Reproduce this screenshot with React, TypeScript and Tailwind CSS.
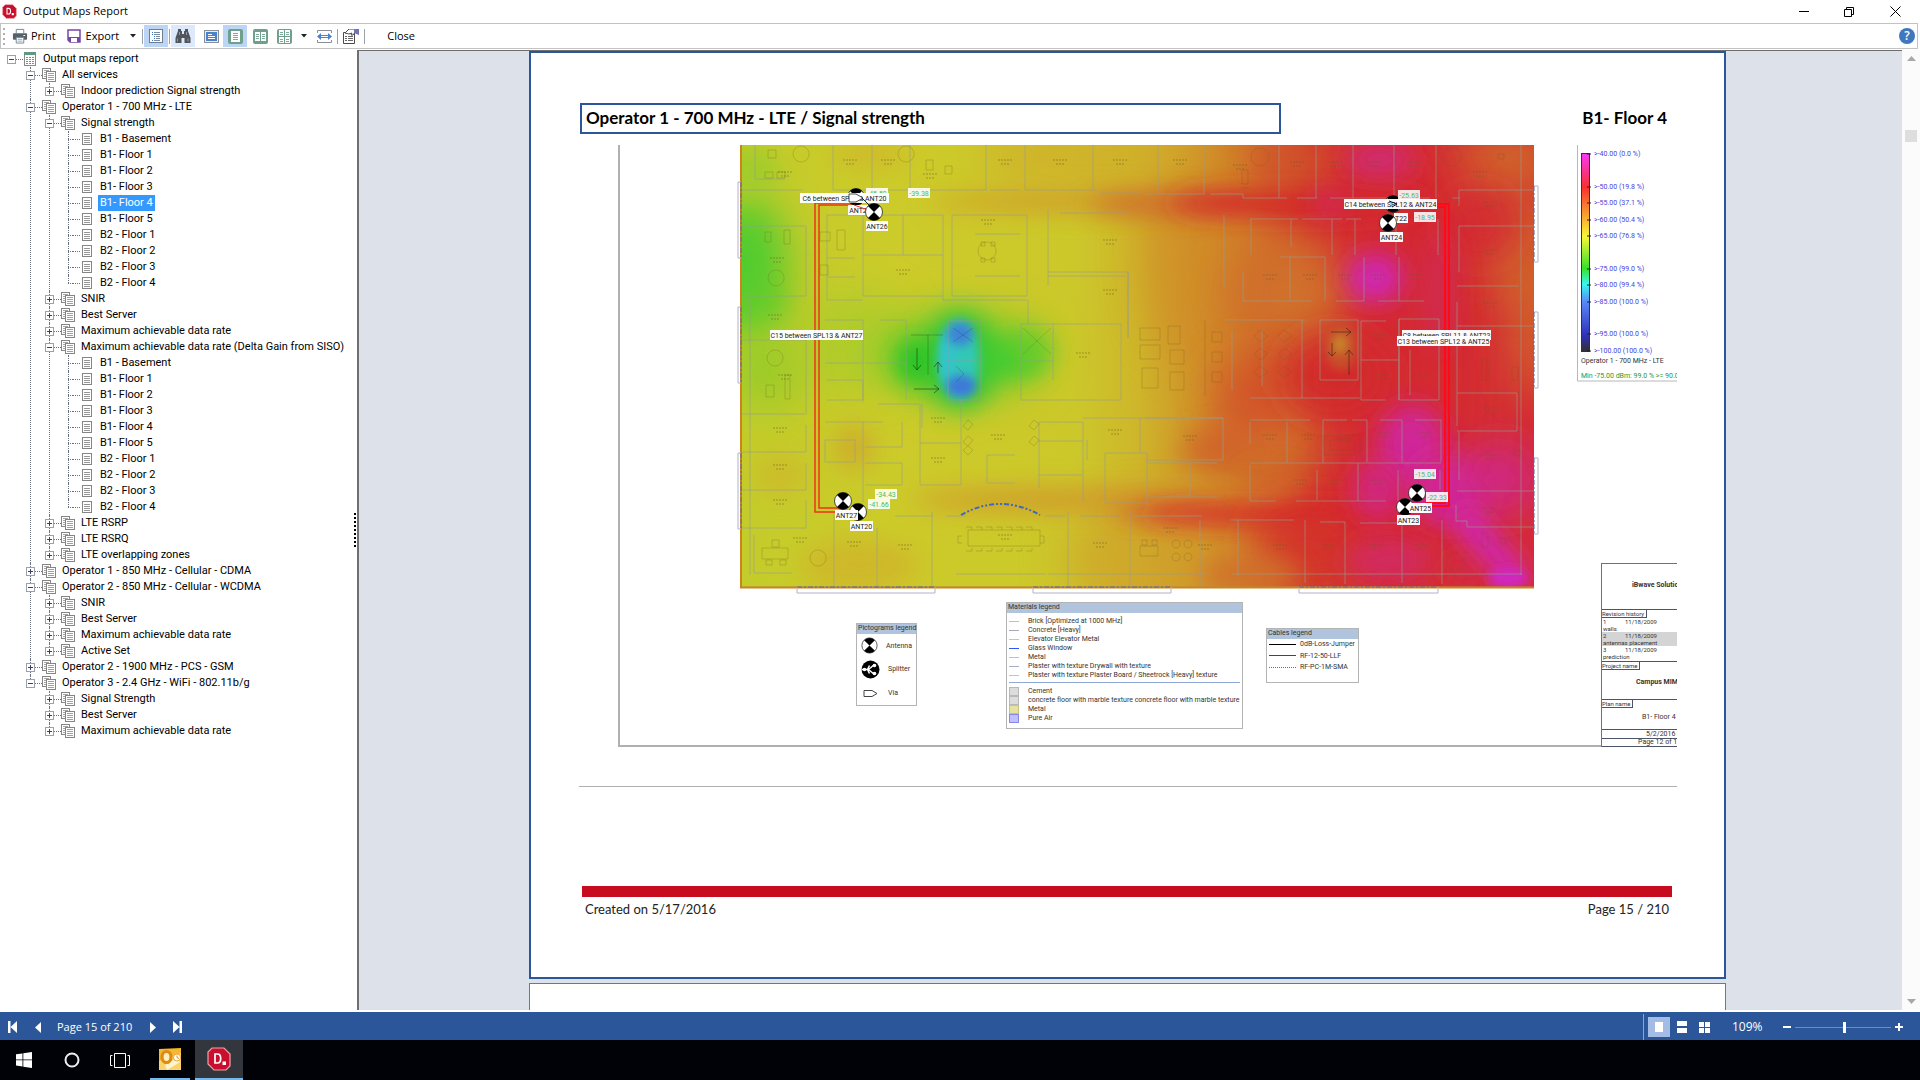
import { useState } from 'react'
import type { ReactNode } from 'react'

interface TreeNode {
  label: string
  open?: boolean
  children?: TreeNode[]
}

const floors = (): TreeNode[] => [
  { label: 'B1 - Basement' },
  { label: 'B1- Floor 1' },
  { label: 'B1- Floor 2' },
  { label: 'B1- Floor 3' },
  { label: 'B1- Floor 4' },
  { label: 'B1- Floor 5' },
  { label: 'B2 - Floor 1' },
  { label: 'B2 - Floor 2' },
  { label: 'B2 - Floor 3' },
  { label: 'B2 - Floor 4' },
]

const closed = (label: string): TreeNode => ({ label, open: false, children: [] })

const tree: TreeNode = {
  label: 'Output maps report',
  open: true,
  children: [
    { label: 'All services', open: true, children: [closed('Indoor prediction Signal strength')] },
    {
      label: 'Operator 1 - 700 MHz - LTE',
      open: true,
      children: [
        { label: 'Signal strength', open: true, children: floors() },
        closed('SNIR'),
        closed('Best Server'),
        closed('Maximum achievable data rate'),
        { label: 'Maximum achievable data rate (Delta Gain from SISO)', open: true, children: floors() },
        closed('LTE RSRP'),
        closed('LTE RSRQ'),
        closed('LTE overlapping zones'),
      ],
    },
    closed('Operator 1 - 850 MHz - Cellular - CDMA'),
    {
      label: 'Operator 2 - 850 MHz - Cellular - WCDMA',
      open: true,
      children: [closed('SNIR'), closed('Best Server'), closed('Maximum achievable data rate'), closed('Active Set')],
    },
    closed('Operator 2 - 1900 MHz - PCS - GSM'),
    {
      label: 'Operator 3 - 2.4 GHz - WiFi - 802.11b/g',
      open: true,
      children: [closed('Signal Strength'), closed('Best Server'), closed('Maximum achievable data rate')],
    },
  ],
}

function AppLogo({ size }: { size: number }) {
  return (
    <svg width={size} height={size} viewBox="0 0 24 24" className="block shrink-0">
      <path d="M5 1h12l6 6v12l-4 4H7l-6-6V5z" fill="#c8102e" stroke="#e9a3ab" strokeWidth="1.2" />
      <path d="M8 7v9h2.500c2.300 0 3.200-1.800 3.200-4.500S12.800 7 10.500 7z" fill="none" stroke="#fff" strokeWidth="1.700" />
      <rect x="15.500" y="14.500" width="3.500" height="3.500" fill="#fff" />
    </svg>
  )
}

function RootIcon() {
  return (
    <svg width="14" height="16" viewBox="0 0 14 16" shapeRendering="crispEdges">
      <rect x="1" y="1" width="12" height="14" fill="#fff" />
      <path d="M1.500 1v14M12.500 1v14M1 14.500h12" stroke="#8a8a8a" />
      <rect x="1" y="1" width="12" height="3" fill="#5f9a80" />
      <path d="M3 6.500h2m1 0h2m1 0h2M3 8.500h2m1 0h2m1 0h2M3 10.500h2m1 0h2m1 0h2M3 12.500h2m1 0h2m1 0h2" stroke="#8a8a8a" />
    </svg>
  )
}

function GroupIcon() {
  return (
    <svg width="14" height="16" viewBox="0 0 14 16" shapeRendering="crispEdges">
      <path d="M0.500 1.500h8v10h-8z" fill="#fff" stroke="#858585" />
      <path d="M2 3.500h5M2 5.500h3M2 7.500h3M2 9.500h3" stroke="#a5a5a5" />
      <path d="M4.500 4.500h9v10h-9z" fill="#fff" stroke="#858585" />
      <path d="M6 6.500h6M6 8.500h6M6 10.500h6M6 12.500h6" stroke="#a0a0a0" />
    </svg>
  )
}

function LeafIcon() {
  return (
    <svg width="14" height="16" viewBox="0 0 14 16" shapeRendering="crispEdges">
      <path d="M2.500 2.500h9v11h-9z" fill="#fff" stroke="#858585" />
      <path d="M4 5.500h6M4 7.500h6M4 9.500h6M4 11.500h6" stroke="#959595" />
    </svg>
  )
}

interface ItemProps {
  node: TreeNode
  path: string
  depth: number
  last: boolean
  selected: string
  onSelect: (path: string) => void
}

function TreeItem({ node, path, depth, last, selected, onSelect }: ItemProps) {
  const [open, setOpen] = useState(!!node.open)
  const isSelected = path === selected

  return (
    <li className="relative">
      {depth > 0 && (
        <span className={last ? 'absolute left-1 top-0 h-2 border-l border-dotted border-gray-500' : 'absolute left-1 top-0 bottom-0 border-l border-dotted border-gray-500'} />
      )}
      <div className="flex h-4 items-center">
        {node.children ? (
          <button
            onClick={() => setOpen(!open)}
            aria-label={open ? 'Collapse' : 'Expand'}
            className="relative block h-[9px] w-[9px] shrink-0 border border-gray-400 bg-white"
          >
            <span className="absolute left-px top-[3px] h-px w-[5px] bg-[#3b3b78]" />
            {!open && <span className="absolute left-[3px] top-px h-[5px] w-px bg-[#3b3b78]" />}
          </button>
        ) : (
          <span className="ml-1 w-[5px] shrink-0 border-t border-dotted border-gray-500" />
        )}
        <span className="w-[7px] shrink-0 border-t border-dotted border-gray-500" />
        <span className="mr-1 shrink-0">{depth === 0 ? <RootIcon /> : node.children ? <GroupIcon /> : <LeafIcon />}</span>
        <button
          onClick={() => onSelect(path)}
          className={isSelected ? 'h-4 whitespace-nowrap bg-[#3399ff] px-0.5 leading-4 text-white' : 'h-4 whitespace-nowrap px-0.5 leading-4'}
        >
          {node.label}
        </button>
      </div>
      {open && node.children && (
        <ul className="pl-[19px]">
          {node.children.map((child, i) => (
            <TreeItem
              key={i}
              node={child}
              path={path + '/' + i}
              depth={depth + 1}
              last={i === node.children!.length - 1}
              selected={selected}
              onSelect={onSelect}
            />
          ))}
        </ul>
      )}
    </li>
  )
}

function Separator() {
  return <span className="mx-px h-[15px] w-px bg-gray-400" />
}

function Caret() {
  return (
    <svg width="6" height="4" viewBox="0 0 6 4">
      <path d="M0 0h6L3 3.500z" fill="#222" />
    </svg>
  )
}

function ToolButton({ label, tone, children }: { label: string; tone?: 'on' | 'hover'; children: ReactNode }) {
  const bg = tone === 'on' ? 'bg-[#bdd5f5]' : tone === 'hover' ? 'bg-[#dce9fb]' : ''
  return (
    <button aria-label={label} className={'flex h-[22px] w-6 items-center justify-center ' + bg}>
      {children}
    </button>
  )
}

function Toolbar() {
  return (
    <div className="mb-px mr-0.5 flex h-[26px] shrink-0 items-center border border-[#c3c3c3] bg-white">
      <svg width="4" height="18" viewBox="0 0 4 18" className="ml-0.5 mr-[5px]">
        <path d="M1 1v2M1 6v2M1 11v2M1 16v2" stroke="#b8a9b8" strokeWidth="2" />
      </svg>
      <button className="flex items-center gap-[3px]">
        <svg width="16" height="16" viewBox="0 0 17 16">
          <path d="M4.500 5V1h8v4" fill="#fff" stroke="#6f8793" />
          <rect x="1" y="5" width="15" height="7" rx="1" fill="#55606b" />
          <rect x="12" y="7" width="2" height="1" fill="#fff" />
          <path d="M4.500 9.500h8v6h-8z" fill="#fff" stroke="#6f8793" />
          <path d="M6 11.500h5M6 13.500h5" stroke="#8ba6b3" />
        </svg>
        <span>Print</span>
      </button>
      <button className="ml-[11px] flex items-center gap-[5px]">
        <svg width="14" height="14" viewBox="0 0 14 14">
          <path d="M1 1h12v12H3l-2-2z" fill="#fff" stroke="#7647a8" strokeWidth="1.500" />
          <path d="M1 8h12v5H3l-2-2z" fill="#7647a8" />
          <rect x="4" y="9" width="6" height="4" fill="#fff" />
        </svg>
        <span>Export</span>
      </button>
      <button aria-label="Export options" className="ml-1.5 flex h-5 w-4 items-center justify-center"><Caret /></button>
      <Separator />
      <ToolButton label="Document map" tone="on">
        <svg width="14" height="14" viewBox="0 0 14 14" shapeRendering="crispEdges">
          <path d="M0.500 0.500h13v13h-13z" fill="#fff" stroke="#6e7f93" />
          <path d="M3 3.500h1M3 5.500h1M5 7.500h1M5 9.500h1M3 11.500h1" stroke="#3f76c0" />
          <path d="M5 3.500h6M5 5.500h6M7 7.500h4M7 9.500h4M5 11.500h6" stroke="#7b8ba0" />
        </svg>
      </ToolButton>
      <Separator />
      <ToolButton label="Find" tone="hover">
        <svg width="16" height="14" viewBox="0 0 16 14" fill="#50555b">
          <path d="M3 0h3v2h1v3h2V2h1V0h3v2l2.500 7v5H9.500V9h-3v5H.5V9L3 2z" />
          <path d="M2.500 9.500v3M13 9.500v3M4.500 3v3M11.500 3v3" stroke="#aab" strokeWidth=".8" />
        </svg>
      </ToolButton>
      <span className="w-1" />
      <ToolButton label="Actual size">
        <svg width="15" height="13" viewBox="0 0 15 13" shapeRendering="crispEdges">
          <path d="M0.500 0.500h14v12h-14z" fill="#e8eef7" stroke="#8a8f96" />
          <rect x="2" y="2" width="11" height="9" fill="#4a83cd" />
          <path d="M4 4.500h4M4 6.500h7M4 8.500h7" stroke="#fff" />
        </svg>
      </ToolButton>
      <ToolButton label="Single page" tone="on">
        <svg width="15" height="15" viewBox="0 0 15 15">
          <rect width="15" height="15" rx="2" fill="#6fa08c" />
          <rect x="3" y="2" width="9" height="11" fill="#fff" />
          <path d="M5 4.500h5M5 6.500h5M5 8.500h5M5 10.500h5" stroke="#7fa99a" />
        </svg>
      </ToolButton>
      <span className="w-px" />
      <ToolButton label="Two pages">
        <svg width="15" height="15" viewBox="0 0 15 15">
          <rect width="15" height="15" rx="2" fill="#6fa08c" />
          <path d="M2 3h5v9H2zM8 3h5v9H8z" fill="#fff" />
          <path d="M3 5.500h3M3 7.500h3M3 9.500h3M9 5.500h3M9 7.500h3M9 9.500h3" stroke="#7fa99a" />
        </svg>
      </ToolButton>
      <ToolButton label="Multiple pages">
        <svg width="15" height="15" viewBox="0 0 15 15">
          <rect width="15" height="15" rx="2" fill="#6fa08c" />
          <path d="M2 1h5v6H2zM8 1h5v6H8zM2 8h5v6H2zM8 8h5v6H8z" fill="#fff" />
          <path d="M3 3.500h3M3 5.500h3M9 3.500h3M9 5.500h3M3 10.500h3M3 12.500h3M9 10.500h3M9 12.500h3" stroke="#7fa99a" />
        </svg>
      </ToolButton>
      <button aria-label="Page layout options" className="flex h-5 w-4 items-center justify-center"><Caret /></button>
      <ToolButton label="Page width">
        <svg width="15" height="13" viewBox="0 0 15 13">
          <path d="M.5 3V.5h14V3M.5 10v2.500h14V10" fill="none" stroke="#8a8f96" />
          <path d="M0 6.500l4-3.500v2h7V3l4 3.500-4 3.500V8H4v2z" fill="#4a83cd" />
          <rect x="4" y="6" width="7" height="1" fill="#fff" />
        </svg>
      </ToolButton>
      <Separator />
      <ToolButton label="Parameters">
        <svg width="17" height="15" viewBox="0 0 17 15">
          <path d="M.5 3.500h11v11H.5z" fill="#fff" stroke="#4b4b4b" />
          <path d="M2 7.500h2m1 0h5M2 9.500h2m1 0h5M2 11.500h2m1 0h5" stroke="#666" />
          <path d="M2 4l4-4h5l2 2-3 4H8l1-2-3 1z" fill="#fff" stroke="#4b4b4b" />
          <path d="M11 0h5v6l-5-2z" fill="#7275b5" />
        </svg>
      </ToolButton>
      <Separator />
      <button className="ml-[21px]">Close</button>
      <button aria-label="Help" className="ml-auto mr-0.5 flex h-4 w-4 items-center justify-center rounded-full bg-[#3f78be] text-[12px] font-semibold leading-4 text-white">?</button>
    </div>
  )
}

interface Blob {
  cx: number
  cy: number
  rx: number
  ry: number
  fill: string
  blur: 's' | 'm' | 'l'
  o?: number
}

const blobs: Blob[] = [
  // orange transition and red core
  { cx: 1200, cy: 250, rx: 60, ry: 120, fill: '#d08a28', blur: 'l', o: 0.6 },
  { cx: 1170, cy: 560, rx: 110, ry: 60, fill: '#d09e29', blur: 'l', o: 0.6 },
  { cx: 1090, cy: 155, rx: 110, ry: 36, fill: '#d0ae2a', blur: 'l', o: 0.8 },
  { cx: 1400, cy: 360, rx: 90, ry: 260, fill: '#d42a32', blur: 'l' },
  { cx: 1285, cy: 295, rx: 60, ry: 60, fill: '#d0702a', blur: 'l' },
  { cx: 1270, cy: 440, rx: 50, ry: 40, fill: '#d0702a', blur: 'l' },
  { cx: 1255, cy: 395, rx: 40, ry: 40, fill: '#d4502a', blur: 'l', o: 0.8 },
  { cx: 1335, cy: 375, rx: 50, ry: 36, fill: '#d22c2c', blur: 'l' },
  { cx: 1210, cy: 450, rx: 30, ry: 22, fill: '#d0502a', blur: 'm', o: 0.5 },
  // corridors
  { cx: 1100, cy: 202, rx: 170, ry: 9, fill: '#d09a2a', blur: 'm' },
  { cx: 1170, cy: 204, rx: 80, ry: 8, fill: '#d0582a', blur: 'm' },
  { cx: 1300, cy: 203, rx: 130, ry: 14, fill: '#d4282c', blur: 'm' },
  { cx: 1290, cy: 165, rx: 40, ry: 24, fill: '#d0552a', blur: 'm', o: 0.6 },
  { cx: 1100, cy: 500, rx: 190, ry: 12, fill: '#d09a2a', blur: 'm' },
  { cx: 1170, cy: 512, rx: 60, ry: 6, fill: '#d4502a', blur: 'm' },
  { cx: 1290, cy: 514, rx: 150, ry: 10, fill: '#d8242c', blur: 'm' },
  { cx: 1310, cy: 545, rx: 60, ry: 40, fill: '#d4302c', blur: 'l', o: 0.8 },
  { cx: 1250, cy: 575, rx: 50, ry: 18, fill: '#d0702a', blur: 'm', o: 0.9 },
  { cx: 1275, cy: 482, rx: 30, ry: 12, fill: '#d0682a', blur: 'm', o: 0.7 },
  // right hand rooms
  { cx: 1510, cy: 160, rx: 50, ry: 30, fill: '#d0682a', blur: 'l' },
  { cx: 1535, cy: 290, rx: 24, ry: 110, fill: '#d0682a', blur: 'l' },
  { cx: 1515, cy: 270, rx: 30, ry: 26, fill: '#d0682a', blur: 'l', o: 0.8 },
  { cx: 1480, cy: 225, rx: 30, ry: 30, fill: '#d42c34', blur: 'l', o: 0.8 },
  // hot spots
  { cx: 1380, cy: 160, rx: 35, ry: 16, fill: '#d02c76', blur: 'm' },
  { cx: 1330, cy: 203, rx: 16, ry: 10, fill: '#d02c86', blur: 'm', o: 0.7 },
  { cx: 1375, cy: 278, rx: 28, ry: 24, fill: '#d028b4', blur: 'm' },
  { cx: 1440, cy: 290, rx: 18, ry: 60, fill: '#d02c60', blur: 'm', o: 0.6 },
  { cx: 1412, cy: 445, rx: 34, ry: 40, fill: '#d02898', blur: 'm' },
  { cx: 1378, cy: 490, rx: 26, ry: 30, fill: '#d02890', blur: 'm', o: 0.8 },
  { cx: 1450, cy: 490, rx: 40, ry: 36, fill: '#d02894', blur: 'm' },
  { cx: 1500, cy: 480, rx: 36, ry: 36, fill: '#d02888', blur: 'l' },
  { cx: 1390, cy: 560, rx: 44, ry: 22, fill: '#d22c6c', blur: 'm', o: 0.8 },
  { cx: 1465, cy: 570, rx: 18, ry: 15, fill: '#d2284c', blur: 'm' },
  // left side
  { cx: 745, cy: 265, rx: 42, ry: 70, fill: '#4fcc2e', blur: 'l' },
  { cx: 755, cy: 305, rx: 35, ry: 24, fill: '#60cc2e', blur: 'm', o: 0.6 },
  { cx: 750, cy: 170, rx: 30, ry: 24, fill: '#a0cc2a', blur: 'm' },
  { cx: 765, cy: 370, rx: 40, ry: 40, fill: '#90cc2a', blur: 'l', o: 0.8 },
  { cx: 850, cy: 340, rx: 60, ry: 50, fill: '#a8cc2a', blur: 'l', o: 0.7 },
  { cx: 854, cy: 448, rx: 20, ry: 22, fill: '#d0a02a', blur: 'm', o: 0.7 },
  { cx: 860, cy: 565, rx: 60, ry: 26, fill: '#d0b42a', blur: 'm', o: 0.8 },
  { cx: 780, cy: 475, rx: 26, ry: 20, fill: '#d0b22a', blur: 'm', o: 0.6 },
  { cx: 870, cy: 155, rx: 40, ry: 12, fill: '#d0b42a', blur: 'm', o: 0.8 },
  // elevator shaft
  { cx: 960, cy: 355, rx: 85, ry: 42, fill: '#80cc2a', blur: 'l' },
  { cx: 960, cy: 360, rx: 38, ry: 50, fill: '#38c63a', blur: 'm' },
  { cx: 915, cy: 362, rx: 20, ry: 24, fill: '#22c428', blur: 'm' },
  { cx: 1010, cy: 358, rx: 32, ry: 18, fill: '#3acc30', blur: 'm' },
  { cx: 1030, cy: 350, rx: 22, ry: 22, fill: '#68cc2c', blur: 'm', o: 0.8 },
  { cx: 959, cy: 360, rx: 20, ry: 40, fill: '#30c8b4', blur: 's' },
  { cx: 948, cy: 358, rx: 8, ry: 26, fill: '#30c4cc', blur: 's' },
  { cx: 960, cy: 334, rx: 13, ry: 12, fill: '#3c84d8', blur: 's' },
  { cx: 961, cy: 386, rx: 15, ry: 11, fill: '#3c78d8', blur: 's' },
  // stair well
  { cx: 1341, cy: 346, rx: 16, ry: 24, fill: '#c8502a', blur: 's' },
  { cx: 1340, cy: 344, rx: 7, ry: 10, fill: '#c8882a', blur: 's' },
]

const walls = [
  'M740 190h62M833 190h78M915 190h72M990 190h30M1025 190h72M1100 193h40M1145 194h60M1210 194h33v4h44M1297 198h20M1330 198h100M1452 198h8',
  'M833 145v45M872 145v45M910 145v45M986 145v45M1025 145v45M1093 145v45M1158 145v48M1204 145v48M1279 145v53M1316 145v53M1353 145v53M1394 145v53M1436 145v53M755 145v34M755 179h30',
  'M742 226h64v70h-64M742 340h64v74h-64M806 425v27h-64M806 463v27h-64M806 500v28h-64',
  'M827 215h116v81h-80v-81M903 215v40M863 255h80M827 215v85h36M827 258h28M827 277h28M952 215v81h75v-81zM975 234h45M975 276h45M943 296v4h84M1048 210v75M1060 213h70M1048 272h80v66M1048 276h78',
  'M863 320v82M906 320v80M825 320h38M825 363h38M865 363h41M880 320h26M827 380h36v20h-36M878 404h44v24M1021 324h100v76h-100zM1053 324v56M1021 361h32M1028 300v24M1128 272v66',
  'M948 321h33v79h-33zM948 361h33M961 400v85h-41v-80M920 443h41M825 422h58M863 422v80M902 422v25h-37M865 463h37v22h-37M825 440h30v22h-30z',
  'M987 455h28M987 455v28h28M1039 422h44v80M1039 422v66M1039 441h44M1039 475h44M1083 418h140M1140 418v35M1105 453h42v50h-42zM1147 463h70M1147 497h70M1190 463v34M1087 440v20M1146 418h77v42h-77',
  'M834 512v75M877 528v59M932 512v75M895 516h38M946 516h20M1045 516h20M1068 512v75M1080 516h40M1130 512v75M1132 516h70M1200 520v67M738 587h794M754 535v38h38M956 574h90M1048 574h160',
  'M1250 219h48M1302 219h40M1346 219h15M1251 219v36M1291 219v28M1332 219v36M1355 219v36M1396 219v36M1438 219v36M1280 257h45v44M1290 257v45M1364 257v44M1399 257v44M1243 272v29h69M1336 301h28M1378 301h46M1224 215v72',
  'M1361 321h25M1361 321v79h25M1361 360h38M1399 319h40v81h-40zM1399 319v81M1250 420h60M1323 420h24M1352 420h15v42M1380 420h22v42M1415 420h26v42M1287 422v41M1323 420v43M1250 463h191M1250 422v22M1250 465v36h26M1296 501h90M1358 463v38M1317 470v30M1398 470v31M1440 470v20',
  'M1230 520h64M1305 520v63M1320 522h25v62M1360 523h42v60M1442 520v64M1238 520v56M1459 190v16M1459 190h75M1459 226h75M1459 226v46M1457 286h62M1457 302v24h77M1457 326v100M1457 393h60v38h-60M1459 432v48M1457 491h77M1456 505v16h11v6h67',
  'M1225 320h80M1302 320v78M1320 320h38v60h-38zM1250 398h110M1232 330v60M1262 330v56M1410 350v45M1232 574h290M1521 145v430M750 300v275',
]

const furniture = [
  'M768 150h8v8h-8zM765 172h8v6h-8zM777 172h8v6h-8zM801 146a8 8 0 1 0 .1 0M906 146a8 8 0 1 0 .1 0M926 160h7v10h-7zM945 166h7v8h-7zM765 232h6v10h-6zM784 230h6v14h-6zM776 270a8 8 0 1 0 .1 0',
  'M987 242a9 9 0 1 0 .1 0M981 242h4v4h-4zM991 242h4v4h-4zM981 258h4v4h-4zM991 258h4v4h-4zM775 350a8 8 0 1 0 .1 0M766 385h8v12h-8zM785 375h5v24h-5zM820 232h10v9h-10zM837 230h8v20h-8zM820 265h8v10h-8z',
  'M762 548h26v11h-26zM772 540h7v7h-7zM766 560h6v5h-6zM780 560h6v5h-6zM818 550a8 8 0 1 0 .1 0M968 420l5 4-5 6-5-4zM968 436l5 4-5 6-5-4zM968 446l5 4-5 5-5-5zM1034 420l5 4-5 6-5-4zM1034 436l5 4-5 6-5-4z',
  'M968 530h72v16h-72zM962 536h-4v7h4M1040 536h4v7h-4M966 527h6v3m4-3h6v3m4-3h6v3m4-3h6v3m4-3h6v3m4-3h6v3m4-3h6v3M966 551h6v-3m4 3h6v-3m4 3h6v-3m4 3h6v-3m4 3h6v-3m4 3h6v-3m4 3h6v-3',
  'M1140 328h20v12h-20zM1140 345h20v14h-20zM1142 368h16v20h-16zM1168 326h12v18h-12zM1170 350h14v14h-14zM1170 372h14v18h-14zM1205 320v76M1212 332h10v10h-10zM1212 352h10v10h-10zM1212 372h10v10h-10z',
  'M1260 330l8 6-8 6-6-6zM1260 348l8 6-8 6-6-6zM1260 366l8 6-8 6-6-6zM1284 330l8 6-8 6-6-6zM1284 348l8 6-8 6-6-6zM1284 366l8 6-8 6-6-6zM1324 435h36v20h-36zM1330 440h24v10h-24z',
  'M1260 148a9 9 0 1 0 .1 0M1452 148a9 9 0 1 0 .1 0M1498 154h6v5h-6zM1456 553a9 9 0 1 0 .1 0M1482 533h6v14h-6zM1500 538h6v6h-6zM1482 360h6v20h-6zM1512 367h6v13h-6zM1514 450h6v6h-6zM1412 376l5-4 4 6 5-4 4 6',
  'M1140 546h18v10h-18zM1142 540h5v5h-5zM1152 540h5v5h-5zM1176 540a4 4 0 1 0 .1 0M1188 540a4 4 0 1 0 .1 0M1176 553a4 4 0 1 0 .1 0M1188 553a4 4 0 1 0 .1 0M1242 188h7M1242 170h6v14h-6z',
]

const roomTags = [
  [785, 172], [850, 160], [888, 160], [930, 174], [1005, 160], [1060, 160], [1120, 160], [1180, 160], [1240, 165], [1297, 162], [1335, 162], [1374, 162],
  [1414, 162], [1480, 172], [777, 258], [988, 220], [903, 270], [775, 315], [785, 375], [780, 428], [780, 465], [780, 500], [800, 538], [854, 542], [905, 545],
  [1005, 535], [1100, 543], [1170, 528], [1205, 545], [1083, 353], [998, 435], [1110, 240], [1110, 290], [1270, 275], [1310, 275], [1345, 275], [1378, 275],
  [1416, 275], [1490, 202], [1490, 250], [1490, 303], [1490, 408], [1490, 455], [1490, 508], [1380, 335], [1382, 375], [1270, 435], [1308, 435], [1345, 438],
  [1384, 433], [1424, 433], [1300, 480], [1335, 480], [1378, 480], [1280, 545], [1328, 545], [1375, 545], [1422, 545], [1115, 430], [1190, 436], [938, 418], [938, 458],
]

function Antenna({ x, y }: { x: number; y: number }) {
  return (
    <g transform={`translate(${x} ${y})`}>
      <circle r="8.500" fill="#fff" stroke="#222" strokeWidth=".8" />
      <path d="M0 0L-6-6A8.500 8.500 0 0 1 6-6ZM0 0L6 6A8.500 8.500 0 0 1-6 6Z" fill="#000" />
    </g>
  )
}

function Tag({ x, y, w, text, green }: { x: number; y: number; w: number; text: string; green?: boolean }) {
  return (
    <g>
      <rect x={x} y={y} width={w} height="10" fill="#fff" fillOpacity={green ? 0.88 : 0.97} />
      <text x={x + w / 2} y={y + 8} textAnchor="middle" fill={green ? '#3fc25c' : '#222'}>{text}</text>
    </g>
  )
}

const scale = [
  [154, '>-40.00 (0.0 %)'],
  [187, '>-50.00 (19.8 %)'],
  [203, '>-55.00 (37.1 %)'],
  [220, '>-60.00 (50.4 %)'],
  [236, '>-65.00 (76.8 %)'],
  [269, '>-75.00 (99.0 %)'],
  [285, '>-80.00 (99.4 %)'],
  [302, '>-85.00 (100.0 %)'],
  [334, '>-95.00 (100.0 %)'],
  [351, '>-100.00 (100.0 %)'],
] as const

// Floor plan with signal strength overlay, in page coordinates.
function FloorMap() {
  return (
    <svg viewBox="579 145 1098 602" width="1098" height="602" className="block text-[7px]">
      <defs>
        <clipPath id="plan"><rect x="740" y="145" width="794" height="443" /></clipPath>
        <linearGradient id="base">
          <stop offset="0" stopColor="#c4cc2a" />
          <stop offset=".2" stopColor="#cccb2a" />
          <stop offset=".42" stopColor="#ccc82a" />
          <stop offset=".5" stopColor="#ceb62a" />
          <stop offset=".57" stopColor="#d0962a" />
          <stop offset=".64" stopColor="#d0702a" />
          <stop offset=".72" stopColor="#d2402c" />
          <stop offset="1" stopColor="#d42c34" />
        </linearGradient>
        <linearGradient id="levels" x2="0" y2="1">
          <stop offset="0" stopColor="#f838f8" />
          <stop offset=".17" stopColor="#f83030" />
          <stop offset=".33" stopColor="#f8b030" />
          <stop offset=".42" stopColor="#f8f838" />
          <stop offset=".58" stopColor="#38e028" />
          <stop offset=".66" stopColor="#38f8f0" />
          <stop offset=".75" stopColor="#5888f8" />
          <stop offset=".92" stopColor="#3030b8" />
          <stop offset="1" stopColor="#303030" />
        </linearGradient>
        <filter id="s" x="-200%" y="-200%" width="500%" height="500%"><feGaussianBlur stdDeviation="5" /></filter>
        <filter id="m" x="-150%" y="-300%" width="400%" height="700%"><feGaussianBlur stdDeviation="12" /></filter>
        <filter id="l" x="-150%" y="-150%" width="400%" height="400%"><feGaussianBlur stdDeviation="21" /></filter>
      </defs>

      <path d="M619 145v601h1058" fill="none" stroke="#b0b0b0" strokeWidth="2" />

      <g clipPath="url(#plan)">
        <rect x="740" y="145" width="794" height="443" fill="url(#base)" />
        {blobs.map((b, i) => (
          <ellipse key={i} cx={b.cx} cy={b.cy} rx={b.rx} ry={b.ry} fill={b.fill} opacity={b.o ?? 1} filter={`url(#${b.blur})`} />
        ))}
        <path d="M1460 515L1520 580" stroke="#d028b8" strokeWidth="26" filter="url(#m)" />
        <ellipse cx="1508" cy="578" rx="20" ry="10" fill="#d028c0" filter="url(#s)" />
        <g fill="none" stroke="#989e90" strokeOpacity=".6">
          {walls.map((d, i) => <path key={i} d={d} />)}
        </g>
        <g fill="none" stroke="#6a5a20" strokeOpacity=".25">
          {furniture.map((d, i) => <path key={i} d={d} />)}
          {roomTags.map(([x, y], i) => (
            <path key={i} d={`M${x - 7} ${y}h14M${x - 4} ${y + 4}h9`} strokeWidth="2" strokeDasharray="2 1" />
          ))}
        </g>
        <g fill="none" stroke="#1c1c10" strokeOpacity=".5">
          <path d="M917 348v22m-4-5l4 5 4-5M938 373v-11m-4 5l4-5 4 5M914 389h25m-5-4l5 4-5 4" />
          <path d="M911 335h32M928 335v40" strokeOpacity=".25" />
          <path d="M1331 332h20m-5-4l5 4-5 4M1332 343v13m-4-4l4 4 4-4M1349 375v-25m-4 5l4-5 4 5" />
          <path d="M953 328l20 14M973 328l-20 14M956 366l8 8-8 8" strokeOpacity=".2" />
          <path d="M1023 328l28 26M1051 328l-28 26" strokeOpacity=".12" />
        </g>
        <path d="M961 515Q1000 493 1040 515" fill="none" stroke="#3c68c0" strokeWidth="2" strokeDasharray="5 2 2 2 2 2" />
      </g>

      <path d="M741 145v443M740 587.500h794" fill="none" stroke="#cc8418" strokeWidth="2" />
      <g fill="none" stroke="#b2b2cc">
        <path d="M741 182h-3v76h3M741 307h-3v76h3M741 453h-3v76h3M1534 186h4v76h-4M1534 312h4v76h-4M1534 458h4v76h-4" />
        <path d="M797 587v6h138v-6M1033 587v6h138v-6M1299 587v6h139v-6" />
      </g>
      <g fill="none" stroke="#5968a8" strokeDasharray="5 2 2 2">
        <path d="M741 182v76M741 307v76M741 453v76M1534 186v76M1534 312v76M1534 458v76M797 587h138M1033 587h138M1299 587h139" />
      </g>

      <g fill="none" stroke="#ee3418" strokeWidth="1.500">
        <path d="M856 203h-41v309h40M856 205h-37v303h24" />
        <path d="M1398 204h51v302h-40M1398 207h47v296h-20" stroke="#ff0a18" strokeWidth="2" />
      </g>

      <g fontFamily="Roboto, 'Liberation Sans', sans-serif">
        <Antenna x={856} y={197} />
        <Tag x={866} y={188} w={22} text="-45.59" green />
        <Tag x={800} y={193} w={89} text="C6 between SPL2 & ANT20" />
        <path d="M849 194h7l7 4-7 4h-7z" fill="#fff" stroke="#222" strokeWidth=".8" />
        <Tag x={848} y={205} w={20} text="ANT2" />
        <path d="M862 198l8 8" stroke="#222" />
        <path d="M854 205l14 5" stroke="#f22" />
        <Antenna x={874} y={212} />
        <Tag x={908} y={188} w={22} text="-39.38" green />
        <Tag x={866} y={221} w={22} text="ANT26" />
        <Tag x={770} y={330} w={93} text="C15 between SPL13 & ANT27" />
        <Antenna x={858} y={512} />
        <Antenna x={843} y={501} />
        <Tag x={875} y={489} w={22} text="-34.43" green />
        <Tag x={868} y={499} w={22} text="-41.66" green />
        <Tag x={835} y={510} w={23} text="ANT27" />
        <Tag x={850} y={521} w={23} text="ANT20" />
        <Antenna x={1393} y={204} />
        <Tag x={1344} y={199} w={93} text="C14 between SPL12 & ANT24" />
        <path d="M1389 201l8 3-5 3" fill="none" stroke="#111" />
        <Tag x={1398} y={190} w={22} text="-25.63" green />
        <Tag x={1394} y={213} w={14} text="T22" />
        <Tag x={1414} y={212} w={22} text="-18.95" green />
        <Antenna x={1388} y={223} />
        <Tag x={1380} y={232} w={23} text="ANT24" />
        <Tag x={1402} y={330} w={89} text="C8 between SPL11 & ANT23" />
        <Tag x={1397} y={336} w={93} text="C13 between SPL12 & ANT25" />
        <Tag x={1414} y={469} w={22} text="-15.04" green />
        <Tag x={1426} y={492} w={22} text="-22.33" green />
        <Antenna x={1405} y={507} />
        <Antenna x={1417} y={493} />
        <Tag x={1409} y={503} w={23} text="ANT25" />
        <Tag x={1397} y={515} w={23} text="ANT23" />

        <path d="M1577.500 145v236h100" fill="none" stroke="#b8b8b8" />
        <rect x="1581.500" y="153.500" width="8" height="198" fill="url(#levels)" stroke="#333" />
        {scale.map(([y, text]) => (
          <g key={y}>
            <path d={`M1587 ${y}h4`} stroke="#222" />
            <text x="1594" y={y + 2} fill="#4444e0">{text}</text>
          </g>
        ))}
        <text x="1581" y="363" fill="#333">Operator 1 - 700 MHz - LTE</text>
        <text x="1581" y="378" fill="#259a30">Min -75.00 dBm: 99.0 % &gt;= 90.0</text>
      </g>
    </svg>
  )
}

const materials = [
  ['Brick [Optimized at 1000 MHz]', 'bg-[#d8b8a0]'],
  ['Concrete [Heavy]', 'bg-[#a8a8b8]'],
  ['Elevator Elevator Metal', 'bg-[#d0cc70]'],
  ['Glass Window', 'bg-[#3058f0]'],
  ['Metal', 'bg-[#c8c880]'],
  ['Plaster with texture Drywall with texture', 'bg-[#a8b0c0]'],
  ['Plaster with texture Plaster Board / Sheetrock [Heavy] texture', 'bg-[#b0d0b0]'],
]

const surfaces = [
  ['Cement', 'border-[#b8b8b8] bg-[#dcdcdc]'],
  ['concrete floor with marble texture concrete floor with marble texture', 'border-[#b8b8b8] bg-[#dcdcdc]'],
  ['Metal', 'border-[#c8c478] bg-[#e6e2a0]'],
  ['Pure Air', 'border-[#8888e8] bg-[#c0c0fc]'],
]

function Legend({ title, place, children }: { title: string; place: string; children: ReactNode }) {
  return (
    <section className={'absolute flex flex-col border border-[#b4b4b4] bg-white ' + place}>
      <h3 className="h-[10px] shrink-0 whitespace-nowrap bg-[#b0c4de] px-px leading-[9px]">{title}</h3>
      {children}
    </section>
  )
}

function Legends() {
  return (
    <>
      <Legend title="Pictograms legend" place="left-[277px] top-[478px] h-[83px] w-[61px]">
        <ul className="flex flex-1 flex-col justify-around px-1">
          <li className="flex items-center gap-2">
            <svg width="19" height="19" viewBox="-9.500 -9.500 19 19"><Antenna x={0} y={0} /></svg>
            Antenna
          </li>
          <li className="flex items-center gap-2">
            <svg width="19" height="19" viewBox="-9.500 -9.500 19 19">
              <circle r="9" />
              <path d="M-9 0h7M-2 0l6-5M-2 0l6 5M-1-4l-2 4 2 4" stroke="#fff" strokeWidth="1.500" fill="none" />
              <circle cx="4" cy="-4" r="1.800" fill="#fff" />
              <circle cx="4" cy="4" r="1.800" fill="#fff" />
              <circle cx="-6" cy="0" r="1.800" fill="#fff" />
            </svg>
            Splitter
          </li>
          <li className="flex items-center gap-2">
            <svg width="19" height="19" viewBox="-9.500 -9.500 19 19">
              <path d="M-6.500-3h8l5 3-5 3h-8z" fill="#fff" stroke="#444" />
            </svg>
            Via
          </li>
        </ul>
      </Legend>

      <Legend title="Materials legend" place="left-[427px] top-[457px] h-[127px] w-[237px]">
        <ul className="mt-1 flex h-[61px] flex-col justify-between">
          {materials.map(([name, color]) => (
            <li key={name} className="flex items-center gap-[9px] whitespace-nowrap pl-0.5 leading-[9px]">
              <span className={'h-px w-[10px] ' + color} />
              {name}
            </li>
          ))}
        </ul>
        <hr className="mx-0.5 mt-1 border-[#8fa8d8]" />
        <ul className="mt-1">
          {surfaces.map(([name, color]) => (
            <li key={name} className="flex items-center gap-[9px] whitespace-nowrap pl-0.5 leading-[9px]">
              <span className={'h-[9px] w-[10px] border ' + color} />
              {name}
            </li>
          ))}
        </ul>
      </Legend>

      <Legend title="Cables legend" place="left-[687px] top-[483px] h-[55px] w-[93px]">
        <ul className="flex h-[34px] flex-col justify-around pl-0.5">
          <li className="flex items-center gap-1"><span className="w-[27px] border-t border-black" />0dB-Loss-Jumper</li>
          <li className="flex items-center gap-1"><span className="w-[27px] border-t border-red-600" />RF-12-50-LLF</li>
          <li className="flex items-center gap-1"><span className="w-[27px] border-t border-dotted border-gray-500" />RF-PC-1M-SMA</li>
        </ul>
      </Legend>
    </>
  )
}

function TitleBlock() {
  return (
    <div className="absolute left-[1022px] top-[418px] flex h-[184px] w-[76px] flex-col overflow-hidden whitespace-nowrap border-l border-t border-gray-500 bg-white">
      <div className="h-[45px] pl-[30px] font-bold leading-[43px]">iBwave Solutions</div>
      <div className="h-[52px] border-t border-gray-600 text-[6px] leading-[7px]">
        <div className="h-2 w-fit border-b border-r border-gray-600 pr-0.5">Revision history</div>
        <div className="grid grid-cols-[22px_1fr] pl-px"><span>1</span><span>11/18/2009</span></div>
        <div className="pl-px">walls</div>
        <div className="grid grid-cols-[22px_1fr] bg-[#d4d4d4] pl-px"><span>2</span><span>11/18/2009</span></div>
        <div className="bg-[#d4d4d4] pl-px">antennas placement</div>
        <div className="grid grid-cols-[22px_1fr] pl-px"><span>3</span><span>11/18/2009</span></div>
        <div className="pl-px">prediction</div>
      </div>
      <div className="h-[38px] border-t border-gray-600">
        <div className="h-2 w-fit border-b border-r border-gray-600 pr-0.5 text-[6px] leading-[7px]">Project name</div>
        <div className="pl-[34px] font-bold leading-[25px]">Campus MIMO</div>
      </div>
      <div className="h-[30px] border-t border-gray-600">
        <div className="h-2 w-fit border-b border-r border-gray-600 pr-0.5 text-[6px] leading-[7px]">Plan name</div>
        <div className="pl-10 leading-[18px]">B1- Floor 4</div>
      </div>
      <div className="h-[9px] border-t border-gray-600 pl-11 leading-[8px]">5/2/2016</div>
      <div className="h-[9px] border-y border-gray-600 pl-9 leading-[7px]">Page 12 of 16</div>
    </div>
  )
}

function ReportPage() {
  return (
    <article className="mr-[6px] h-[928px] w-[1197px] shrink-0 border-2 border-[#2b579a] bg-white pl-12 pr-[47px] pt-[50px] font-[Lato,Carlito,sans-serif] text-black">
      <header className="flex items-center justify-between text-[17px] font-bold">
        <h1 className="ml-px h-[31px] w-[701px] border-2 border-[#2b579a] pl-1 leading-[25px]">Operator 1 - 700 MHz - LTE / Signal strength</h1>
        <h2 className="mr-2.5 h-[31px] border-t-2 border-transparent leading-[25px]">B1- Floor 4</h2>
      </header>
      <div className="relative mt-[11px] h-[642px] border-b border-[#b0b0b0] font-[Roboto,'Liberation_Sans',sans-serif] text-[7px] text-[#333]">
        <FloorMap />
        <Legends />
        <TitleBlock />
      </div>
      <footer className="ml-[3px] mr-[5px] mt-[99px] border-t-[11px] border-[#c60c1e]">
        <div className="flex justify-between px-[3px] pt-px text-[13px] leading-[22px] text-[#222]">
          <span>Created on 5/17/2016</span>
          <span>Page 15 / 210</span>
        </div>
      </footer>
    </article>
  )
}

function StatusBar() {
  const [zoom, setZoom] = useState(52)
  return (
    <div className="flex h-7 shrink-0 items-center bg-[#2b579a] pt-0.5 text-white">
      <button aria-label="First page" className="ml-2">
        <svg width="9" height="12" viewBox="0 0 9 12" fill="#fff"><path d="M0 0h2.500v12H0zM9 0v12L2.500 6z" /></svg>
      </button>
      <button aria-label="Previous page" className="ml-[18px]">
        <svg width="6" height="11" viewBox="0 0 6 11" fill="#fff"><path d="M6 0v11L0 5.500z" /></svg>
      </button>
      <span className="ml-4 mr-[18px] whitespace-nowrap">Page 15 of 210</span>
      <button aria-label="Next page">
        <svg width="6" height="11" viewBox="0 0 6 11" fill="#fff"><path d="M0 0v11l6-5.500z" /></svg>
      </button>
      <button aria-label="Last page" className="ml-[17px]">
        <svg width="9" height="12" viewBox="0 0 9 12" fill="#fff"><path d="M6.500 0H9v12H6.500zM0 0v12l6.500-6z" /></svg>
      </button>
      <span className="ml-auto h-[26px] w-px bg-[#8ba5cf]" />
      <button aria-label="Single page view" className="ml-1 flex h-5 w-[22px] items-center justify-center bg-[#a3bce6]">
        <svg width="8" height="10"><rect width="8" height="10" fill="#fff" /></svg>
      </button>
      <button aria-label="Continuous view" className="ml-[7px]">
        <svg width="10" height="12" viewBox="0 0 10 12" fill="#fff"><path d="M0 0h10v5H0zM0 7h10v5H0z" /></svg>
      </button>
      <button aria-label="Multiple page view" className="ml-3">
        <svg width="11" height="11" viewBox="0 0 11 11" fill="#fff"><path d="M0 0h5v5H0zM6 0h5v5H6zM0 6h5v5H0zM6 6h5v5H6z" /></svg>
      </button>
      <span className="ml-[22px] w-[51px] text-[12px]">109%</span>
      <button aria-label="Zoom out" className="h-0.5 w-2 bg-white" />
      <input
        type="range"
        aria-label="Zoom"
        min={0}
        max={100}
        value={zoom}
        onChange={(e) => setZoom(Number(e.target.value))}
        className="mx-1 h-3 w-24 appearance-none bg-transparent bg-[linear-gradient(#6d8dc2,#6d8dc2)] bg-[length:100%_1px] bg-center bg-no-repeat [&::-webkit-slider-thumb]:h-[11px] [&::-webkit-slider-thumb]:w-[3px] [&::-webkit-slider-thumb]:appearance-none [&::-webkit-slider-thumb]:bg-white"
      />
      <button aria-label="Zoom in" className="mr-[17px]">
        <svg width="8" height="8" viewBox="0 0 8 8" fill="#fff"><path d="M3 0h2v3h3v2H5v3H3V5H0V3h3z" /></svg>
      </button>
    </div>
  )
}

function Taskbar() {
  return (
    <nav className="flex h-10 shrink-0 items-center bg-[#010208]">
      <button aria-label="Start" className="flex h-10 w-12 items-center justify-center">
        <svg width="16" height="16" viewBox="0 0 16 16" fill="#fff"><path d="M0 2.300l6.500-.9v6.100H0zM7.300 1.300L16 0v7.500H7.300zM0 8.300h6.500v6.200L0 13.600zM7.300 8.300H16V16l-8.700-1.300z" /></svg>
      </button>
      <button aria-label="Cortana" className="flex h-10 w-12 items-center justify-center">
        <svg width="16" height="16" viewBox="0 0 16 16"><circle cx="8" cy="8" r="6.500" fill="none" stroke="#eee" strokeWidth="2" /></svg>
      </button>
      <button aria-label="Task view" className="flex h-10 w-12 items-center justify-center">
        <svg width="20" height="15" viewBox="0 0 20 15" fill="none" stroke="#fff"><path d="M4.500.5h11v14h-11zM2.500 2.500h-2v10h2M17.500 2.500h2v10h-2" /></svg>
      </button>
      <button aria-label="Outlook" className="ml-1.5 flex h-10 w-10 items-center justify-center border-b-2 border-[#76b9ed]">
        <svg width="22" height="22" viewBox="0 0 22 22">
          <path d="M0 1l22-1v22H0z" fill="#f5b82e" />
          <path d="M0 22V13l22-8v17z" fill="#fbd36b" />
          <path d="M8 22l13-8-5-3-10 6z" fill="#fff4d0" />
          <ellipse cx="7.500" cy="9" rx="4.500" ry="5.500" fill="#fff0c0" stroke="#e08a12" strokeWidth="3.200" />
          <circle cx="18" cy="9.500" r="3.500" fill="#fff" stroke="#e6a93a" />
          <path d="M18 7.500v2l2 1" fill="none" stroke="#d88a20" />
        </svg>
      </button>
      <button aria-label="iBwave Design" className="ml-[5px] flex h-10 w-12 items-center justify-center border-b-2 border-[#76b9ed] bg-[#33373d]">
        <AppLogo size={24} />
      </button>
    </nav>
  )
}

export default function App() {
  const [selected, setSelected] = useState('r/1/0/4')

  return (
    <div className="flex h-screen flex-col overflow-hidden bg-white font-['Open_Sans','Noto_Sans',sans-serif] text-[11px] text-black">
      <div className="flex h-[23px] shrink-0 items-center">
        <span className="ml-0.5"><AppLogo size={15} /></span>
        <span className="ml-1.5">Output Maps Report</span>
        <button aria-label="Minimize" className="ml-auto flex h-5 w-[45px] items-center justify-center">
          <span className="h-px w-2.5 bg-black" />
        </button>
        <button aria-label="Restore" className="flex h-5 w-[46px] items-center justify-center">
          <svg width="10" height="10" viewBox="0 0 10 10" fill="none" stroke="#000"><path d="M.5 2.500h7v7h-7zM2.500 2.500v-2h7v7h-2" /></svg>
        </button>
        <button aria-label="Close window" className="mr-0.5 flex h-5 w-[46px] items-center justify-center">
          <svg width="11" height="11" viewBox="0 0 11 11" stroke="#000"><path d="M.5.5l10 10M10.500.5l-10 10" /></svg>
        </button>
      </div>
      <Toolbar />
      <main className="flex min-h-0 flex-1 pb-0.5">
        <aside className="w-[352px] shrink-0 overflow-hidden pl-[7px] pt-px font-[Roboto,'Liberation_Sans',sans-serif]">
          <ul>
            <TreeItem node={tree} path="r" depth={0} last selected={selected} onSelect={setSelected} />
          </ul>
        </aside>
        <div className="flex w-[5px] shrink-0 flex-col items-center justify-center gap-0.5">
          {Array.from({ length: 9 }, (_, i) => <span key={i} className="h-0.5 w-0.5 bg-black" />)}
        </div>
        <section className="flex min-w-0 flex-1 flex-col items-center gap-1 overflow-hidden border-l-2 border-t border-[#6f6f6f] bg-[#dce1ea]">
          <ReportPage />
          <article className="mr-[6px] h-[928px] w-[1197px] shrink-0 border border-[#777] bg-white" />
        </section>
        <div className="flex w-[18px] shrink-0 flex-col items-center bg-[#fbfbfb] py-1.5">
          <svg width="9" height="5" viewBox="0 0 9 5"><path d="M0 5L4.500 0 9 5z" fill="#a8a8a8" /></svg>
          <span className="mt-[69px] h-3 w-3 bg-[#dedede]" />
          <svg width="9" height="5" viewBox="0 0 9 5" className="mt-auto"><path d="M0 0l4.500 5L9 0z" fill="#a8a8a8" /></svg>
        </div>
      </main>
      <StatusBar />
      <Taskbar />
    </div>
  )
}
